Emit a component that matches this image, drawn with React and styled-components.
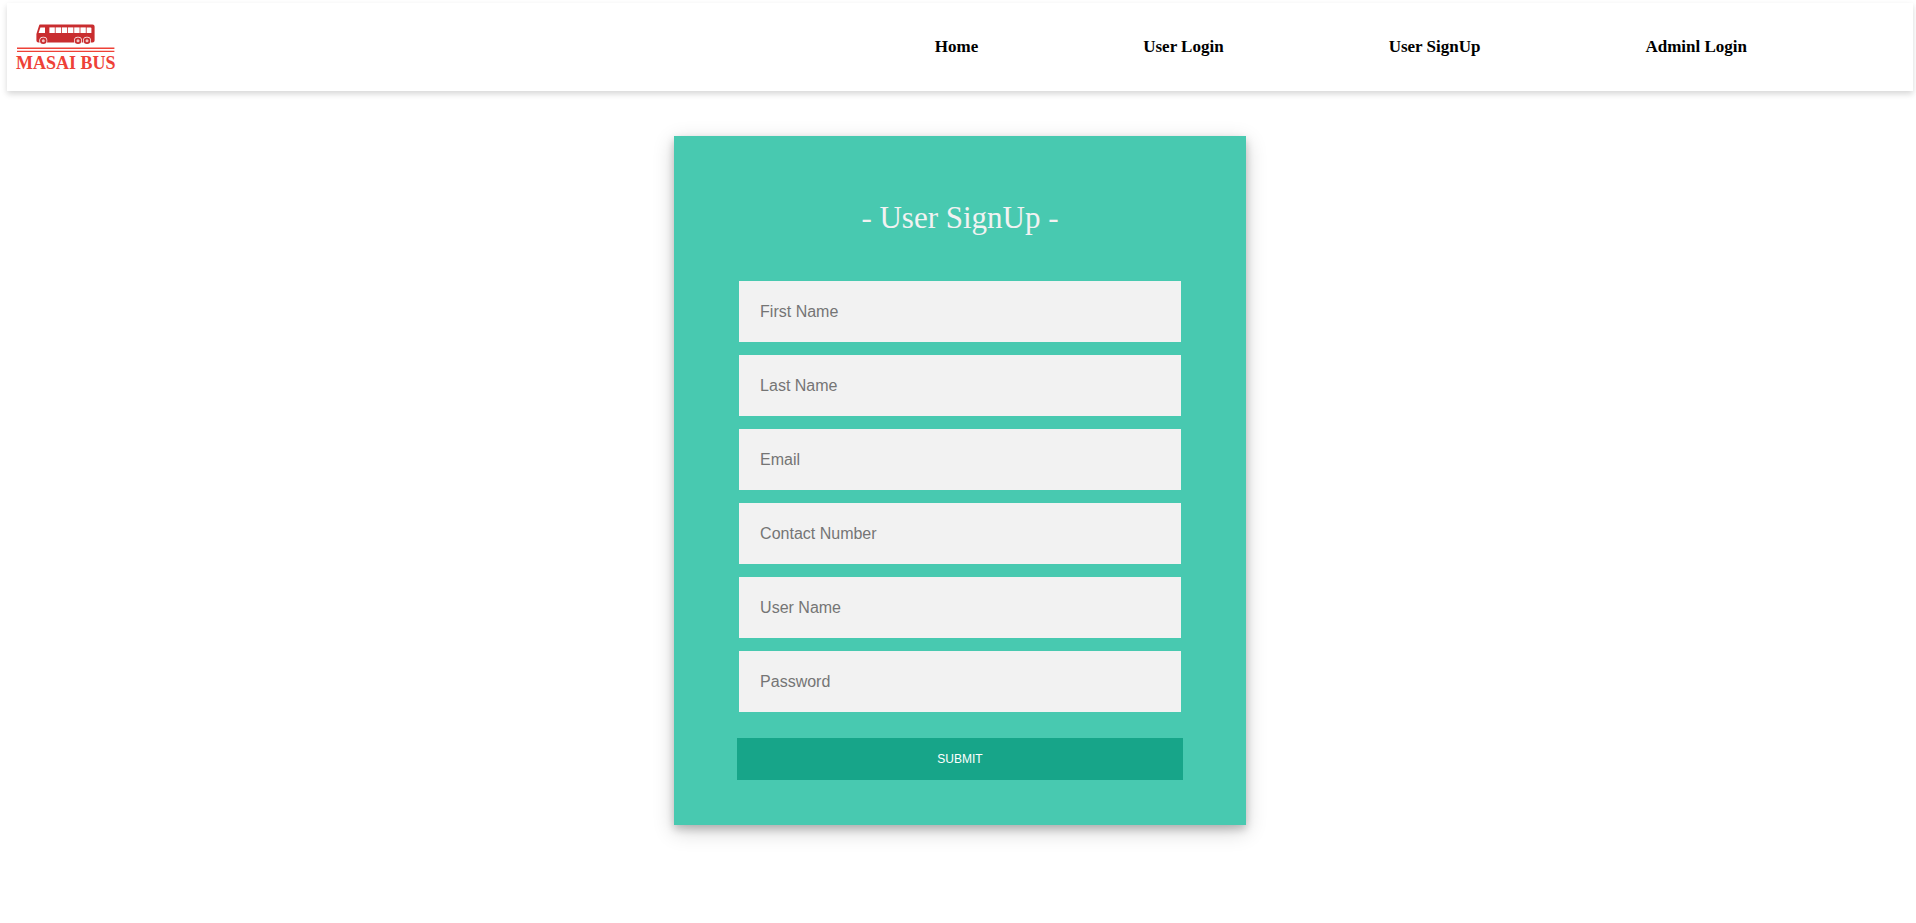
import React from "react";
import styled, { createGlobalStyle } from "styled-components";

const GlobalStyle = createGlobalStyle`
  body {
    margin: 0;
    background: #ffffff;
    font-family: "Liberation Serif", "Times New Roman", serif;
  }
`;

const Page = styled.div`
  padding: 3px 3px 48px 7px;
`;

const NavBar = styled.header`
  display: flex;
  align-items: center;
  justify-content: space-between;
  box-sizing: border-box;
  height: 88px;
  padding: 0 166px 0 8px;
  background: #ffffff;
  box-shadow: 0 3px 6px rgba(0, 0, 0, 0.16);
`;

const HomeLink = styled.a`
  display: flex;
`;

const NavLinks = styled.nav`
  display: flex;
  gap: 165px;
`;

const NavLink = styled.a`
  color: #000000;
  font-size: 17px;
  font-weight: bold;
  line-height: 20px;
  text-decoration: none;
  white-space: nowrap;
`;

const Card = styled.main`
  box-sizing: border-box;
  width: 30%;
  min-width: 320px;
  margin: 45px auto 0;
  padding: 64px 63px 45px;
  background: #48c9b0;
  box-shadow: 0 4px 8px rgba(0, 0, 0, 0.2), 0 6px 20px rgba(0, 0, 0, 0.19);
`;

const Title = styled.h1`
  margin: 0 0 45px;
  color: #f2f2f2;
  font-size: 31px;
  font-weight: normal;
  line-height: 36px;
  text-align: center;
`;

const Form = styled.form`
  display: flex;
  flex-direction: column;
`;

const Fields = styled.div`
  display: flex;
  flex-direction: column;
  gap: 13px;
  padding: 0 2px;
  margin-bottom: 26px;
`;

const Field = styled.input`
  box-sizing: border-box;
  width: 100%;
  height: 61px;
  padding: 0 21px;
  border: 0;
  border-radius: 0;
  background: #f2f2f2;
  font-family: "Liberation Sans", Arial, sans-serif;
  font-size: 16px;

  &::placeholder {
    color: #757575;
  }
`;

const SubmitButton = styled.button`
  height: 42px;
  padding: 0;
  border: 0;
  background: #17a589;
  color: #ffffff;
  font-family: "Liberation Sans", Arial, sans-serif;
  font-size: 12px;
  cursor: pointer;
`;

const LogoText = styled.text`
  font-family: "Liberation Serif", serif;
  font-size: 18px;
  font-weight: bold;
  fill: #ee4137;
`;

function Logo() {
  return (
    <svg width="102" height="52" viewBox="-2 -2 102 52" role="img" aria-label="Masai Bus">
      <path
        d="M23 1.4H75.5Q77.6 1.4 77.6 3.6V17.5Q77.6 19.6 75.5 19.6H21.5Q19.4 19.6 19.4 17.6V11L22 2.8Q22.3 1.4 23 1.4Z"
        fill="#c92d2f"
      />
      <path d="M23.4 4.4H28V10H21.6Z" fill="#fff" />
      {[32.4, 38.6, 44.8, 51, 57.2, 63.4].map((x) => (
        <rect key={x} x={x} y="4.4" width="5.4" height="5.6" fill="#fff" />
      ))}
      <path d="M69.6 4.4H73.5Q74.4 4.4 74.4 5.4V10H69.6Z" fill="#fff" />
      {[26.3, 61, 70].map((cx) => (
        <g key={cx}>
          <circle cx={cx} cy="17.8" r="4" fill="#fff" />
          <circle cx={cx} cy="17.8" r="3.3" fill="#c92d2f" />
          <circle cx={cx} cy="17.8" r="1.5" fill="#f3c4c3" />
        </g>
      ))}
      <path d="M0 25.3H97.4" stroke="#ee4137" strokeWidth="1.5" />
      <path d="M0 28.3H97.4" stroke="#ee4137" strokeWidth="1.3" />
      <LogoText x="-1" y="46">MASAI BUS</LogoText>
    </svg>
  );
}

const links = ["Home", "User Login", "User SignUp", "Adminl Login"];

const fields = [
  { label: "First Name", name: "firstName", type: "text" },
  { label: "Last Name", name: "lastName", type: "text" },
  { label: "Email", name: "email", type: "email" },
  { label: "Contact Number", name: "contact", type: "tel" },
  { label: "User Name", name: "userName", type: "text" },
  { label: "Password", name: "password", type: "password" },
];

export default function App() {
  return (
    <>
      <GlobalStyle />
      <Page>
        <NavBar>
          <HomeLink href="#home" aria-label="Masai Bus">
            <Logo />
          </HomeLink>
          <NavLinks>
            {links.map((label) => (
              <NavLink key={label} href={`#${label.toLowerCase().replace(" ", "-")}`}>
                {label}
              </NavLink>
            ))}
          </NavLinks>
        </NavBar>
        <Card>
          <Title>- User SignUp -</Title>
          <Form onSubmit={(event) => event.preventDefault()}>
            <Fields>
              {fields.map(({ label, name, type }) => (
                <Field key={name} type={type} name={name} placeholder={label} aria-label={label} />
              ))}
            </Fields>
            <SubmitButton type="submit">SUBMIT</SubmitButton>
          </Form>
        </Card>
      </Page>
    </>
  );
}
